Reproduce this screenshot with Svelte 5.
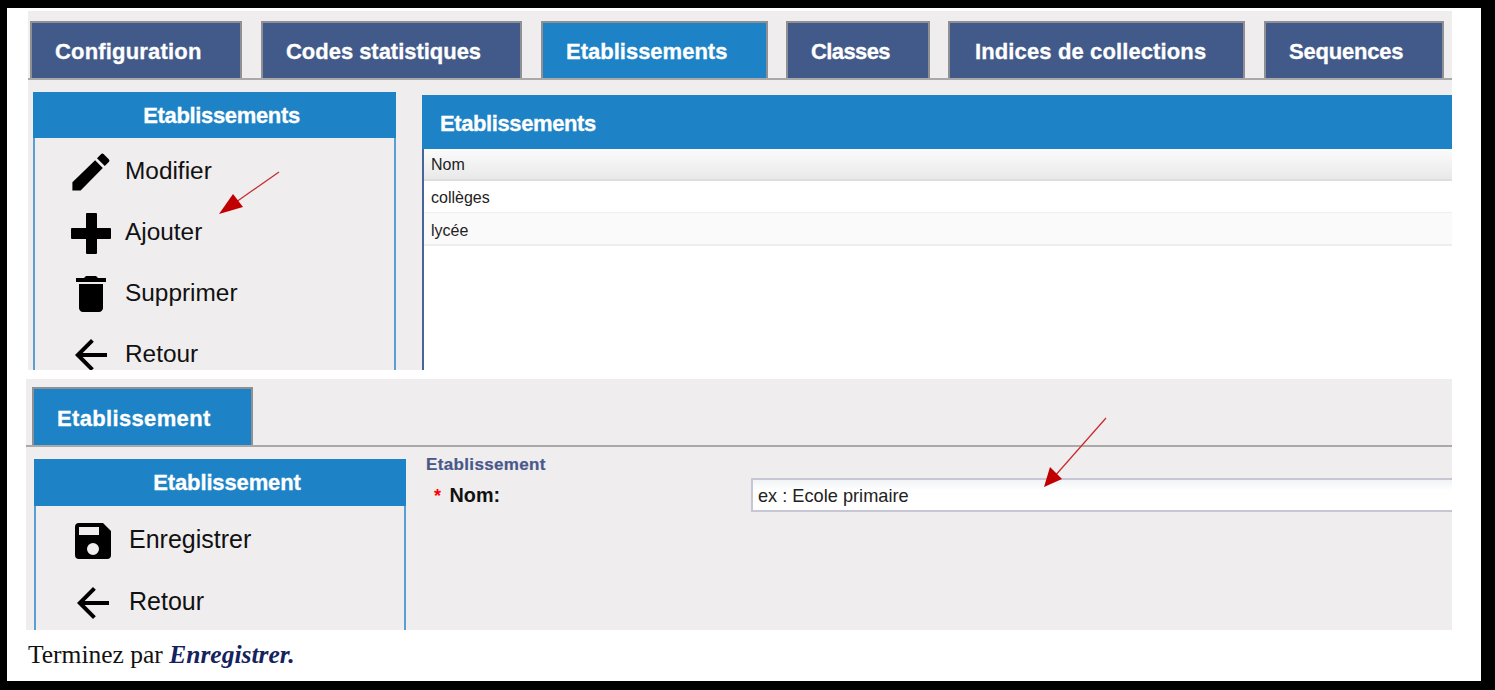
<script>
  const tabs = ['Configuration', 'Codes statistiques', 'Etablissements', 'Classes', 'Indices de collections', 'Sequences'];
</script>

<div class="frame">
  <div class="sheet">
    <section class="shot one">
      <nav class="tabs">
        {#each tabs as t, i}
          <div class="tab" class:active={i === 2}>{t}</div>
        {/each}
      </nav>
      <div class="columns">
        <aside class="menu">
          <h3>Etablissements</h3>
          <ul>
            <li>
              <svg viewBox="0 0 24 24"><path d="M2.700 17.100V21.200h4.100L17.900 9.940l-3.850-3.850L2.700 17.100zM20.900 7.040a1 1 0 0 0 0-1.410l-2.500-2.500a1 1 0 0 0-1.410 0l-2 2 3.900 3.900 2-2z"/></svg>
              Modifier
            </li>
            <li>
              <svg viewBox="0 0 24 24"><path d="M10 2h4.500a.5.5 0 0 1 .5.500V9.500h6.500a.5.5 0 0 1 .5.500v4.500a.5.5 0 0 1-.5.500H15v7a.5.5 0 0 1-.5.500H10a.5.5 0 0 1-.5-.500v-7H2.500a.5.5 0 0 1-.5-.500V10a.5.5 0 0 1 .5-.500h7V2.500A.5.5 0 0 1 10 2z"/></svg>
              Ajouter
            </li>
            <li>
              <svg viewBox="0 0 24 24"><path d="M6 19c0 1.100.9 2 2 2h8c1.100 0 2-.9 2-2V7H6v12zM19.500 4h-4l-1-1h-5l-1 1h-4v2h15V4z"/></svg>
              Supprimer
            </li>
            <li>
              <svg viewBox="0 0 24 24"><path d="M20 11H7.830l5.590-5.590L12 4l-8 8 8 8 1.410-1.410L7.830 13H20v-2z"/></svg>
              Retour
            </li>
          </ul>
        </aside>
        <div class="list">
          <h2>Etablissements</h2>
          <div class="thead">Nom</div>
          <div class="row">collèges</div>
          <div class="row alt">lycée</div>
        </div>
      </div>
      <svg class="arrow a1" viewBox="0 0 70 50"><path d="M60 1 10 36" stroke="#c8282c" stroke-width="1.200" fill="none"/><path d="M0 43 14 23 24 36z" fill="#c00000"/></svg>
    </section>

    <section class="shot two">
      <nav class="tabs">
        <div class="tab active">Etablissement</div>
      </nav>
      <div class="columns">
        <aside class="menu">
          <h3>Etablissement</h3>
          <ul>
            <li>
              <svg viewBox="0 0 24 24"><path d="M17 3H5a2 2 0 0 0-2 2v14a2 2 0 0 0 2 2h14a2 2 0 0 0 2-2V7l-4-4zm-5 16a3 3 0 1 1 0-6 3 3 0 0 1 0 6zm3-10H5V5h10v4z"/></svg>
              Enregistrer
            </li>
            <li>
              <svg viewBox="0 0 24 24"><path d="M20 11H7.830l5.590-5.590L12 4l-8 8 8 8 1.410-1.410L7.830 13H20v-2z"/></svg>
              Retour
            </li>
          </ul>
        </aside>
        <div class="form">
          <div class="legend">Etablissement</div>
          <div class="field">
            <label for="nom"><span class="req">*</span> Nom:</label>
            <input id="nom" value="ex : Ecole primaire" />
          </div>
        </div>
      </div>
      <svg class="arrow a2" viewBox="0 0 70 80"><path d="M66 1 14 60" stroke="#c8282c" stroke-width="1.200" fill="none"/><path d="M4 70 10 50 22 62z" fill="#c00000"/></svg>
    </section>

    <p class="note">Terminez par <em>Enregistrer.</em></p>
  </div>
</div>

<style>
  :global(body) { margin: 0; background: #000; }
  .frame {
    width: 1495px;
    height: 690px;
    box-sizing: border-box;
    padding: 8px 14px 9px 7px;
    background: #000;
    overflow: hidden;
  }
  .sheet {
    height: 673px;
    background: #fff;
    padding: 3px 29px 0 21px;
    box-sizing: border-box;
  }
  .shot {
    position: relative;
    background: #efedee;
    overflow: hidden;
    font-family: "Liberation Sans", Arial, sans-serif;
  }
  .one { height: 359px; margin-bottom: 9px; }
  .two { height: 251px; margin-left: -2px; }

  .tabs {
    display: flex;
    align-items: flex-end;
    border-bottom: 2px solid #aaa9aa;
    box-sizing: border-box;
    height: 69px;
    padding: 10px 0 0 2px;
  }
  .tab {
    height: 57px;
    box-sizing: border-box;
    display: flex;
    align-items: center;
    padding: 3px 0 0 23px;
    margin-right: 19px;
    background: #425a8a;
    border: 2px solid #8f9094;
    border-bottom: 0;
    color: #fff;
    font-size: 22px;
    font-weight: 700;
    -webkit-text-stroke: 0.3px #fff;
    white-space: nowrap;
  }
  .tab.active { background: #1d83c6; }
  .one .tab:nth-child(1) { width: 212px; letter-spacing: 0.18px; }
  .one .tab:nth-child(2) { width: 261px; letter-spacing: -0.03px; }
  .one .tab:nth-child(3) { width: 227px; margin-right: 18px; }
  .one .tab:nth-child(4) { width: 144px; margin-right: 18px; letter-spacing: -0.6px; }
  .one .tab:nth-child(5) { width: 297px; padding-left: 25px; letter-spacing: 0.12px; }
  .one .tab:nth-child(6) { width: 180px; margin-right: 0; letter-spacing: -0.2px; }

  .two .tabs { height: 68px; padding: 8px 0 0 6px; }
  .two .tab { width: 221px; height: 58px; padding-top: 4px; letter-spacing: 0.34px; }

  .columns { display: flex; align-items: flex-start; }
  .one .columns { padding: 12px 0 0 5px; }
  .two .columns { padding: 12px 0 0 8px; }

  .menu {
    flex: none;
    box-sizing: border-box;
    border: 2px solid #5a9fd3;
    border-top: 0;
    height: 400px;
  }
  .one .menu { width: 363px; }
  .two .menu { width: 372px; }
  .menu h3 {
    margin: 0 -2px;
    height: 46px;
    box-sizing: border-box;
    padding: 2px 0 0 14px;
    background: #1d83c6;
    color: #fff;
    font-size: 22px;
    font-weight: 700;
    -webkit-text-stroke: 0.3px #fff;
    letter-spacing: -0.34px;
    display: flex;
    align-items: center;
    justify-content: center;
  }
  .menu ul { list-style: none; margin: 0; padding: 0; }
  .menu li {
    display: flex;
    align-items: center;
    gap: 10px;
    font-size: 24.400px;
    color: #111;
    height: 61px;
    padding-left: 32px;
  }
  .one .menu li:first-child { margin-top: 2px; }
  .menu li svg { width: 48px; height: 48px; flex: none; margin-top: 3px; }
  .two .menu h3 { height: 47px; padding-top: 0; letter-spacing: -0.13px; }
  .two .menu li { height: 62px; padding-left: 33px; gap: 12px; font-size: 25px; }
  .two .menu li:first-child { margin-top: 2px; }

  .list {
    flex: 1;
    margin: 3px 0 0 26px;
    background: #fff;
    border-left: 2px solid #46659a;
    height: 400px;
    font-size: 16px;
    color: #222;
    min-width: 0;
  }
  .list h2 {
    margin: 0 0 0 -2px;
    height: 54px;
    box-sizing: border-box;
    padding: 4px 0 0 18px;
    background: #1d83c6;
    color: #fff;
    font-size: 22px;
    font-weight: 700;
    -webkit-text-stroke: 0.3px #fff;
    letter-spacing: -0.4px;
    display: flex;
    align-items: center;
  }
  .thead {
    height: 32px;
    line-height: 32px;
    box-sizing: border-box;
    padding-left: 7px;
    background: linear-gradient(#fbfbfb, #e9e9ea);
    border-bottom: 2px solid #dededd;
  }
  .row {
    height: 32px;
    line-height: 33px;
    box-sizing: border-box;
    padding-left: 7px;
    border-bottom: 1px solid #efefef;
  }
  .row.alt { height: 33px; line-height: 35px; background: #fafafa; border-bottom: 2px solid #eeeeee; }

  .form { flex: 1; padding: 0 0 0 20px; margin-top: -4px; min-width: 0; }
  .legend { color: #49588a; font-size: 17px; font-weight: 700; letter-spacing: 0.35px; -webkit-text-stroke: 0.2px #49588a; }
  .field { display: flex; align-items: center; margin-top: 3px; }
  .field label {
    width: 325px;
    flex: none;
    box-sizing: border-box;
    padding-left: 8px;
    font-size: 19.800px;
    font-weight: 700;
    color: #111;
  }
  .req { color: #f00; margin-right: 3px; font-size: 18px; }
  input {
    flex: 1;
    min-width: 0;
    height: 34px;
    box-sizing: border-box;
    padding: 3px 5px 0;
    margin-right: -4px;
    border: 2px solid #c6c6d4;
    background: linear-gradient(#f1f3f4, #fff 35%);
    font-family: "Liberation Sans", Arial, sans-serif;
    font-size: 18.200px;
    color: #222;
  }

  .arrow { position: absolute; }
  .a1 { left: 191px; top: 160px; width: 70px; height: 50px; }
  .a2 { left: 1014px; top: 38px; width: 70px; height: 80px; }

  .note {
    margin: 11px 0 0 0;
    font-family: "Liberation Serif", "Times New Roman", serif;
    font-size: 25.500px;
    line-height: 28px;
    color: #111;
  }
  .note em { color: #14235e; font-weight: 700; }
</style>
